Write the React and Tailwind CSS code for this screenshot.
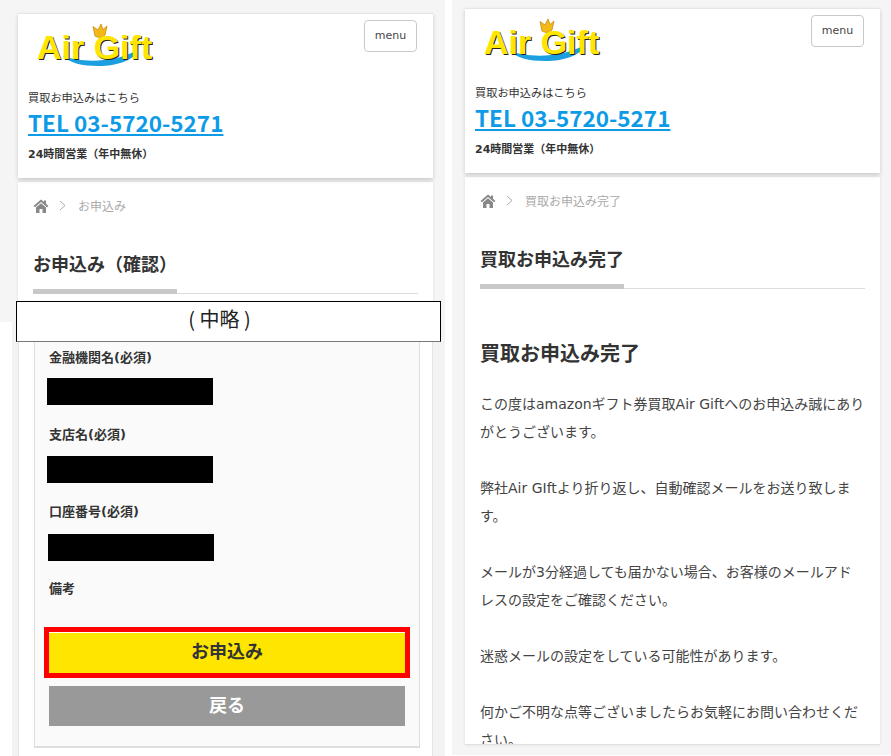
const font = 'font-["DejaVu_Sans","Noto_Sans_CJK_JP",sans-serif]'

function Logo() {
  return (
    <div className="relative h-[50px] w-[125px]">
      <svg className="absolute left-0 top-0" width="125" height="50" viewBox="0 0 125 50">
        {/* 波 */}
        <path d="M29 33 C48 40 80 40 104 27 C100 37 84 43 64 43 C48 43 36 40 29 33 Z" fill="#1b9fe0" />
        {/* 王冠 */}
        <path d="M61 13 L59 3.500 L64 7 L67 1 L69 6.500 L73 3 L71 12 C68 15 64 15 61 13 Z" fill="#f5b915" stroke="#c98a10" strokeWidth="0.8" />
      </svg>
      <span className="absolute left-[3px] top-[5px] whitespace-nowrap font-['Liberation_Sans',sans-serif] text-[34px] font-bold leading-[38px] text-[#ffe600] [text-shadow:1px_1px_0_#222]">
        Air Gift
      </span>
    </div>
  )
}

function Header() {
  return (
    <div className="relative h-[165px] w-[415px] border-t border-[#e5e5e5] bg-white shadow-[0_2px_4px_rgba(0,0,0,0.18)]">
      <div className="absolute left-[16px] top-[9px]">
        <Logo />
      </div>
      <button className="absolute right-[16px] top-[6px] h-[32px] w-[53px] rounded-[4px] border border-[#c9c9c9] text-[11px] text-[#444]">
        menu
      </button>
      <div className="pl-[10px] pt-[76px] text-[#333]">
        <p className="text-[11.2px] leading-[18px]">買取お申込みはこちら</p>
        <a className="mt-[-1px] block font-['Noto_Sans_CJK_JP',sans-serif] text-[22.500px] font-bold leading-[30px] text-[#0d9be8] underline">TEL 03-5720-5271</a>
        <p className="mt-[9px] text-[11px] font-bold leading-[18px]">24時間営業（年中無休）</p>
      </div>
    </div>
  )
}

function Crumb({ text }) {
  return (
    <div className="flex h-[18px] items-center text-[12px] text-[#aaa]">
      <svg className="mt-[-3px]" width="16" height="14" viewBox="0 0 16 14" fill="#888">
        <path d="M8 0.500 L0.500 7 L2 8.200 L8 3 L14 8.200 L15.500 7 L13 4.800 V1.500 H11 V3 Z" />
        <path d="M3 8.500 L8 4.200 L13 8.500 V14 H9.500 V10 H6.500 V14 H3 Z" />
      </svg>
      <svg className="ml-[10px] mt-[-3px]" width="7" height="11" viewBox="0 0 7 11" fill="none" stroke="#aaa">
        <path d="M1 1 L6 5.500 L1 10" />
      </svg>
      <span className="ml-[12px]">{text}</span>
    </div>
  )
}

function Title({ text }) {
  return (
    <div className="relative mt-[35px] h-[43px] border-b border-[#ddd]">
      <h1 className="text-[18px] font-bold leading-[28px] text-[#333]">{text}</h1>
      <div className="absolute bottom-[-1px] left-0 h-[5px] w-[144px] bg-[#c8c8c8]" />
    </div>
  )
}

function Field({ label, box }) {
  return (
    <div className="h-[77px]">
      <p className="pl-[2px] text-[13px] font-bold leading-[18px] text-[#333]">{label}</p>
      <div className={`h-[27px] w-[166px] bg-black ${box}`} />
    </div>
  )
}

const paragraphs = [
  'この度はamazonギフト券買取Air Giftへのお申込み誠にありがとうございます。',
  '弊社Air GIftより折り返し、自動確認メールをお送り致します。',
  'メールが3分経過しても届かない場合、お客様のメールアドレスの設定をご確認ください。',
  '迷惑メールの設定をしている可能性があります。',
  '何かご不明な点等ございましたらお気軽にお問い合わせください。',
]

export default function App() {
  return (
    <div className={`relative flex h-[756px] w-[891px] overflow-hidden bg-white ${font}`}>
      {/* 左: 確認画面 */}
      <div className="w-[445px] shrink-0">
        <div className="h-[322px] bg-[#f5f5f5] pl-[18px] pr-[12px] pt-[13px]">
          <Header />
          <div className="mt-[4px] h-[140px] w-[415px] bg-white px-[15px] pt-[16px] shadow-[0_0_3px_rgba(0,0,0,0.1)]">
            <Crumb text="お申込み" />
            <Title text="お申込み（確認）" />
          </div>
        </div>
        <div className="h-[434px] pl-[12px]">
          <div className="h-full bg-[#f3f3f3] pl-[6px] pr-[12px]">
            <div className="h-full border-x border-[#e5e5e5] bg-white px-[15px]">
              <div className="h-[426px] w-[386px] border-x border-b-2 border-[#dedede] bg-[#fafafa] pl-[12px] pr-[12px] pt-[27px]">
                <Field label="金融機関名(必須)" box="mt-[11px]" />
                <Field label="支店名(必須)" box="mt-[12px]" />
                <Field label="口座番号(必須)" box="ml-[1px] mt-[13px]" />
                <p className="pl-[2px] text-[13px] font-bold leading-[18px] text-[#333]">備考</p>
                <button className="mt-[29px] ml-[-3px] block h-[51px] w-[366px] border-[5px] border-[#ff0000] bg-white">
                  <span className="flex h-[40px] items-center justify-center bg-[#ffe600] pb-[2px] text-[18px] font-bold text-[#333]">お申込み</span>
                </button>
                <button className="ml-[2px] mt-[8px] block h-[40px] w-[356px] bg-[#999] pb-[2px] text-[18px] font-bold text-white">戻る</button>
              </div>
            </div>
          </div>
        </div>
      </div>

      {/* 右: 完了画面 */}
      <div className="flex-1 pl-[7px]">
        <div className="h-[755px] bg-[#f5f5f5] pl-[13px] pt-[8px]">
          <Header />
          <div className="mt-[4px] h-[568px] w-[415px] overflow-hidden border-b border-[#e0e0e0] bg-white px-[15px] pt-[16px] shadow-[0_0_3px_rgba(0,0,0,0.1)]">
            <Crumb text="買取お申込み完了" />
            <Title text="買取お申込み完了" />
            <h2 className="mt-[51px] text-[20px] font-bold leading-[28px] text-[#333]">買取お申込み完了</h2>
            <div className="mt-[22px] flex flex-col gap-[28px] text-[14px] leading-[28px] text-[#444]">
              {paragraphs.map(p => (
                <p key={p}>{p}</p>
              ))}
            </div>
          </div>
        </div>
      </div>

      {/* 中略 */}
      <div className="absolute left-[16px] top-[301px] flex h-[41px] w-[425px] items-center justify-center border border-black border-b-[#777] bg-white pb-[5px] pr-[18px] font-['Noto_Sans_CJK_JP',sans-serif] text-[20px] text-[#222]">
        ( 中略 )
      </div>
    </div>
  )
}
